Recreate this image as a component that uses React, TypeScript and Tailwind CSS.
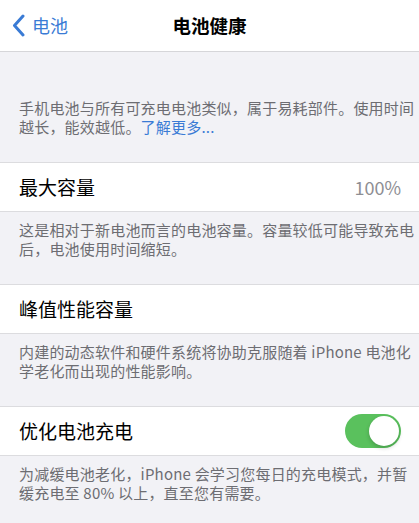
import React from 'react'

const font = { fontFamily: '"Noto Sans CJK SC", "Noto Sans", sans-serif' }

function Row({ label, children }: { label: string; children?: React.ReactNode }) {
  return (
    <div className="flex h-[50px] items-center justify-between border-y border-[#dcdcdf] bg-white pl-[19px] pr-[18px]">
      <span className="text-[19px] text-black">{label}</span>
      {children}
    </div>
  )
}

function Note({ children }: { children: React.ReactNode }) {
  return (
    <p className="whitespace-nowrap pl-[19px] pr-[4px] pt-[8px] pb-[26px] text-[15px] leading-[19px] tracking-[0.2px] text-[#6d6d72]">
      {children}
    </p>
  )
}

export default function App() {
  return (
    <div className="h-[523px] w-[419px] overflow-hidden bg-[#f2f2f6]" style={font}>
      <div className="relative flex h-[52px] items-center justify-center border-b border-[#d6d6d9] bg-white">
        <div className="absolute left-[12px] top-0 flex h-full items-center gap-[7px] text-[#3a7bd5]">
          <svg width="13" height="23" viewBox="0 0 13 23" fill="none">
            <path d="M11 2 L2.5 11.5 L11 21" stroke="currentColor" strokeWidth="3" strokeLinecap="round" strokeLinejoin="round" />
          </svg>
          <span className="text-[18px]">电池</span>
        </div>
        <span className="text-[18.5px] font-semibold text-black">电池健康</span>
      </div>

      <p className="whitespace-nowrap pl-[19px] pt-[46px] pb-[26px] text-[15px] leading-[19px] tracking-[0.2px] text-[#6d6d72]">
        手机电池与所有可充电电池类似，属于易耗部件。使用时间
        <br />
        越长，能效越低。<span className="text-[#3a7bd5]">了解更多...</span>
      </p>

      <Row label="最大容量">
        <span className="text-[18px] text-[#8e8e93]">100%</span>
      </Row>
      <Note>
        这是相对于新电池而言的电池容量。容量较低可能导致充电
        <br />
        后，电池使用时间缩短。
      </Note>

      <Row label="峰值性能容量" />
      <Note>
        内建的动态软件和硬件系统将协助克服随着 iPhone 电池化
        <br />
        学老化而出现的性能影响。
      </Note>

      <Row label="优化电池充电">
        <div className="relative h-[34px] w-[56px] rounded-full bg-[#5ac15d]">
          <div className="absolute right-[2px] top-[2px] h-[30px] w-[30px] rounded-full bg-white shadow-[0_2px_4px_rgba(0,0,0,0.2)]" />
        </div>
      </Row>
      <Note>
        为减缓电池老化，iPhone 会学习您每日的充电模式，并暂
        <br />
        缓充电至 80% 以上，直至您有需要。
      </Note>
    </div>
  )
}
